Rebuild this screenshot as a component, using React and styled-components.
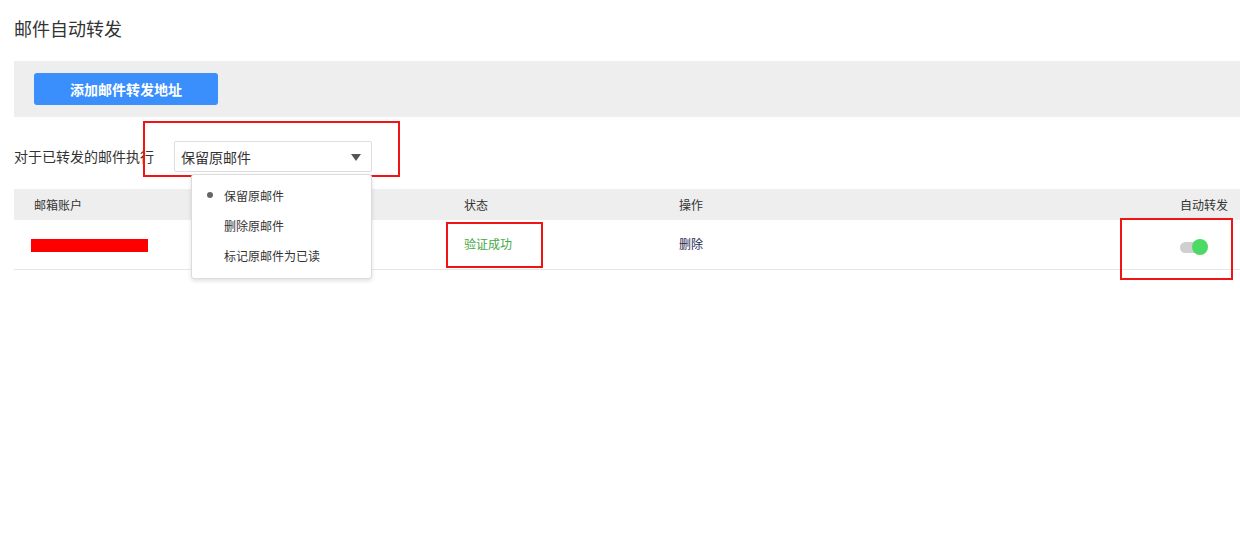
import React from "react";
import styled, { createGlobalStyle } from "styled-components";

const Global = createGlobalStyle`
  html, body { margin: 0; padding: 0; background: #fff; }
  body { font-family: "Noto Sans CJK SC", "Noto Sans", sans-serif; color: #333; }
  * { box-sizing: border-box; }
`;

const Page = styled.div`
  width: 1240px;
  min-height: 557px;
  padding-left: 14px;
  padding-top: 16px;
`;

const Title = styled.h1`
  margin: 0 0 21px;
  font-size: 18px;
  line-height: 24px;
  font-weight: 400;
  color: #333;
`;

const Toolbar = styled.div`
  height: 56px;
  background: #eeeeee;
  padding: 12px 20px;
`;

const PrimaryButton = styled.button`
  width: 184px;
  height: 32px;
  border: none;
  border-radius: 3px;
  background: #3a8ffd;
  color: #fff;
  font-family: inherit;
  font-size: 14px;
  font-weight: 700;
  line-height: 32px;
  padding: 0;
  cursor: pointer;
`;

const FilterRow = styled.div`
  display: flex;
  align-items: center;
  gap: 20px;
  margin-top: 24px;
  height: 31px;
  position: relative;
  z-index: 4;
`;

const Label = styled.span`
  font-size: 14px;
  line-height: 20px;
  color: #333;
  margin-top: -1px;
`;

const SelectWrap = styled.div`
  position: relative;
`;

const SelectBox = styled.div`
  width: 198px;
  height: 31px;
  border: 1px solid #dddddd;
  border-radius: 2px;
  display: flex;
  align-items: center;
  justify-content: space-between;
  padding: 0 10px 0 6px;
  font-size: 14px;
  color: #333;
  background: #fff;
`;

const Caret = styled.span`
  width: 0;
  height: 0;
  border-left: 5px solid transparent;
  border-right: 5px solid transparent;
  border-top: 7px solid #555;
  margin-top: 1px;
`;

const Highlight = styled.div`
  position: absolute;
  border: 2px solid #f01414;
  pointer-events: none;
  z-index: 3;
  left: ${(p) => p.$left}px;
  top: ${(p) => p.$top}px;
  width: ${(p) => p.$w}px;
  height: ${(p) => p.$h}px;
`;

const Menu = styled.ul`
  position: absolute;
  z-index: 5;
  top: 33px;
  left: 17px;
  width: 181px;
  margin: 0;
  padding: 5px 0 8px;
  list-style: none;
  background: #fff;
  border: 1px solid #dcdcdc;
  border-radius: 3px;
  box-shadow: 0 2px 4px rgba(0, 0, 0, 0.12);
`;

const MenuItem = styled.li`
  height: 30px;
  display: flex;
  align-items: center;
  padding-left: 32px;
  position: relative;
  font-size: 12px;
  color: #333;
  &::before {
    content: "";
    display: ${(p) => (p.$active ? "block" : "none")};
    position: absolute;
    left: 15px;
    top: 12px;
    width: 6px;
    height: 6px;
    border-radius: 50%;
    background: #666;
  }
`;

const Table = styled.div`
  margin-top: 17px;
`;

const Grid = styled.div`
  display: grid;
  grid-template-columns: 430px 215px 1fr 48px;
  align-items: center;
  padding: 0 12px 0 20px;
  font-size: 12px;
  color: #333;
`;

const HeadRow = styled(Grid)`
  height: 31px;
  background: #eeeeee;
`;

const BodyRow = styled(Grid)`
  height: 50px;
  border-bottom: 1px solid #e6e6e6;
  align-items: stretch;
`;

const Cell = styled.div`
  position: relative;
  display: flex;
  align-items: center;
  justify-content: ${(p) => (p.$right ? "flex-end" : "flex-start")};
`;

const Redacted = styled.div`
  width: 117px;
  height: 13px;
  background: #ff0000;
  margin-left: -3px;
  margin-top: 1px;
`;

const Status = styled.span`
  color: #45a845;
  margin-top: -2px;
`;

const ActionLink = styled.a`
  color: #262650;
  text-decoration: none;
  cursor: pointer;
  margin-top: -2px;
`;

const Toggle = styled.div`
  position: relative;
  width: 28px;
  height: 16px;
  margin-top: 7px;
`;

const Track = styled.div`
  position: absolute;
  left: 0;
  top: 2px;
  width: 22px;
  height: 11px;
  border-radius: 6px;
  background: #cfcfcf;
`;

const Knob = styled.div`
  position: absolute;
  left: 12px;
  top: -1px;
  width: 16px;
  height: 16px;
  border-radius: 50%;
  background: #4cd964;
`;

export default function App() {
  return (
    <>
      <Global />
      <Page>
        <Title>邮件自动转发</Title>
        <Toolbar>
          <PrimaryButton>添加邮件转发地址</PrimaryButton>
        </Toolbar>
        <FilterRow>
          <Label>对于已转发的邮件执行</Label>
          <SelectWrap>
            <SelectBox>
              <span>保留原邮件</span>
              <Caret />
            </SelectBox>
            <Highlight $left={-31} $top={-20} $w={257} $h={56} />
            <Menu>
              <MenuItem $active>保留原邮件</MenuItem>
              <MenuItem>删除原邮件</MenuItem>
              <MenuItem>标记原邮件为已读</MenuItem>
            </Menu>
          </SelectWrap>
        </FilterRow>
        <Table>
          <HeadRow>
            <Cell>邮箱账户</Cell>
            <Cell>状态</Cell>
            <Cell>操作</Cell>
            <Cell $right>自动转发</Cell>
          </HeadRow>
          <BodyRow>
            <Cell>
              <Redacted />
            </Cell>
            <Cell>
              <Status>验证成功</Status>
              <Highlight $left={-18} $top={2} $w={97} $h={46} />
            </Cell>
            <Cell>
              <ActionLink>删除</ActionLink>
            </Cell>
            <Cell>
              <Toggle>
                <Track />
                <Knob />
              </Toggle>
              <Highlight $left={-60} $top={-2} $w={113} $h={62} />
            </Cell>
          </BodyRow>
        </Table>
      </Page>
    </>
  );
}
